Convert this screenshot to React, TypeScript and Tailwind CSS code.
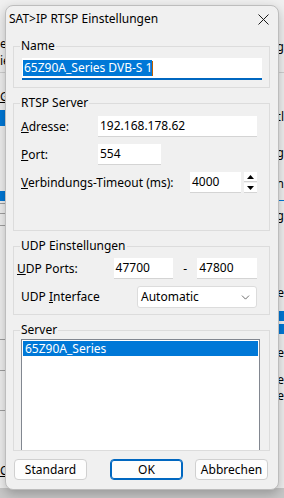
import { ChevronDown } from "lucide-react";

const font = { fontFamily: '"Noto Sans", "Liberation Sans", sans-serif' };

const TextBox = ({ value, className }: { value: string; className: string }) => (
  <div
    className={`h-[21px] bg-white border-b border-[#d4d4d4] flex items-center pl-[2px] text-[12px] text-black ${className}`}
  >
    {value}
  </div>
);

const Group = ({
  label,
  className,
  children,
}: {
  label: string;
  className: string;
  children?: React.ReactNode;
}) => (
  <div className={`relative border border-[#dcdcdc] ${className}`}>
    <span className="absolute -top-[9px] left-[6px] bg-[#f0f0f0] px-[1px] leading-[16px] text-[12px] text-black">
      {label}
    </span>
    {children}
  </div>
);

const Btn = ({ label, primary }: { label: string; primary?: boolean }) => (
  <button
    className={`w-[73px] h-[21px] rounded-[4px] bg-[#fdfdfd] text-[12px] text-black flex items-center justify-center ${
      primary ? "border border-[#0067c0] shadow-[inset_0_0_0_1px_#0067c0]" : "border border-[#d0d0d0]"
    }`}
  >
    {label}
  </button>
);

export default function App() {
  return (
    <div
      className="relative w-[284px] h-[498px] overflow-hidden bg-[#f0f0f0] text-black"
      style={font}
    >
      {/* background window bits */}
      <div className="absolute left-0 top-[37px] text-[12px] leading-[14px]">er</div>
      <div className="absolute left-0 top-[54px] text-[12px] leading-[14px]">ie</div>
      <div className="absolute left-0 right-0 top-[72px] h-px bg-[#d0d0d0]" />
      <div className="absolute left-0 top-[88px] text-[12px] underline">G</div>
      <div className="absolute left-0 top-[110px] w-[6px] h-[16px] bg-[#0078d7]" />
      <div className="absolute left-0 top-[191px] w-[6px] h-[10px] bg-[#0078d7]" />
      <div className="absolute left-0 top-[203px] w-[6px] h-px bg-[#a0a0a0]" />
      <div className="absolute left-0 top-[213px] w-[6px] h-px bg-[#a0a0a0]" />
      <div className="absolute left-0 top-[225px] w-[6px] h-px bg-[#a0a0a0]" />
      <div className="absolute left-0 top-[339px] w-[6px] h-px bg-[#a0a0a0]" />
      <div className="absolute left-0 top-[370px] w-[6px] h-px bg-[#a0a0a0]" />
      <div className="absolute left-0 top-[410px] w-[6px] h-px bg-[#a0a0a0]" />
      <div className="absolute right-0 top-[38px] text-[12px]">lg</div>
      <div className="absolute right-0 top-[108px] text-[12px]">tl</div>
      <div className="absolute right-0 top-[144px] text-[12px]">g</div>
      <div className="absolute right-0 top-[175px] text-[12px]">n</div>
      <div className="absolute right-0 top-[200px] w-[6px] h-px bg-[#0078d7]" />
      <div className="absolute right-0 top-[207px] text-[12px] underline">g</div>
      <div className="absolute right-0 top-[284px] text-[12px]">e</div>
      <div className="absolute right-0 top-[311px] w-[6px] h-[10px] bg-[#0078d7]" />
      <div className="absolute right-0 top-[324px] w-[6px] h-[10px] bg-[#0078d7]" />
      <div className="absolute right-0 top-[346px] text-[12px] leading-[14px]">e</div>
      <div className="absolute right-0 top-[373px] text-[12px] leading-[14px]">e</div>
      <div className="absolute right-0 top-[389px] text-[12px] leading-[14px]">e</div>
      <div className="absolute left-0 right-0 bottom-0 h-[10px] bg-[#c8c8c8]" />
      <div className="absolute left-0 top-[462px] text-[12px] underline">Co</div>

      {/* dialog */}
      <div className="absolute left-[5px] top-[5px] w-[274px] h-[485px] rounded-[8px] bg-[#f0f0f0] border border-[#bdbdbd] shadow-[0_4px_12px_rgba(0,0,0,0.25)] flex flex-col">
        <div className="h-[25px] flex items-center justify-between pl-[3px] pr-[9px] text-[12px]">
          <span className="mt-[1px]">SAT&gt;IP RTSP Einstellungen</span>
          <svg width="11" height="11" viewBox="0 0 11 11" className="mt-[1px]">
            <path d="M0.5 0.5 L10.5 10.5 M10.5 0.5 L0.5 10.5" stroke="#1a1a1a" strokeWidth="1" />
          </svg>
        </div>

        <div className="flex flex-col pl-[7px] pr-[8px]">
          <Group label="Name" className="mt-[15px] h-[42px] pt-[11px] pl-[8px] pr-[7px]">
            <div className="h-[22px] bg-white border-b-2 border-[#0067c0] flex items-center pl-[1px] text-[12px]">
              <span className="bg-[#0078d7] text-white leading-[16px] pl-[1px]">
                65Z90A_Series DVB-S 1
              </span>
              <span className="w-px h-[15px] bg-[#c06000]" />
            </div>
          </Group>

          <Group label="RTSP Server" className="mt-[15px] h-[128px] pt-[12px] pr-[12px] text-[12px]">
            <div className="flex items-center">
              <span className="w-[84px] pl-[7px]">
                <u>A</u>dresse:
              </span>
              <TextBox value="192.168.178.62" className="flex-1" />
            </div>
            <div className="flex items-center mt-[7px]">
              <span className="w-[84px] pl-[7px]">
                <u>P</u>ort:
              </span>
              <TextBox value="554" className="w-[63px]" />
            </div>
            <div className="flex items-center mt-[7px]">
              <span className="w-[176px] pl-[7px]">
                <u>V</u>erbindungs-Timeout (ms):
              </span>
              <TextBox value="4000" className="w-[51px]" />
              <div className="ml-[3px] w-[13px] h-[21px] flex flex-col gap-px">
                <div className="flex-1 bg-white border-b border-[#d4d4d4] flex items-center justify-center">
                  <svg width="7" height="4" viewBox="0 0 7 4">
                    <path d="M3.5 0 L7 4 L0 4 Z" fill="#000" />
                  </svg>
                </div>
                <div className="flex-1 bg-white border-b border-[#d4d4d4] flex items-center justify-center">
                  <svg width="7" height="4" viewBox="0 0 7 4">
                    <path d="M0 0 L7 0 L3.5 4 Z" fill="#000" />
                  </svg>
                </div>
              </div>
            </div>
          </Group>

          <Group label="UDP Einstellungen" className="mt-[15px] h-[69px] pt-[11px] pr-[12px] text-[12px]">
            <div className="flex items-center">
              <span className="w-[100px] pl-[3px]">
                <u>U</u>DP Ports:
              </span>
              <TextBox value="47700" className="w-[60px]" />
              <span className="w-[24px] text-center">-</span>
              <TextBox value="47800" className="w-[60px]" />
            </div>
            <div className="flex items-center mt-[7px]">
              <span className="w-[123px] pl-[7px]">
                UDP <u>I</u>nterface
              </span>
              <div className="flex-1 h-[22px] bg-white border border-[#dcdcdc] rounded-[3px] flex items-center justify-between pl-[3px] pr-[4px]">
                <span>Automatic</span>
                <ChevronDown size={13} strokeWidth={1.3} color="#333" />
              </div>
            </div>
          </Group>

          <Group label="Server" className="mt-[15px] h-[121px] pt-[8px] pl-[7px] pr-[9px] text-[12px]">
            <div className="h-[111px] bg-white border border-b-0 border-[#828790] p-[1px]">
              <div className="h-[15px] bg-[#0078d7] text-white flex items-center pl-[2px]">
                65Z90A_Series
              </div>
            </div>
          </Group>

          <div className="flex items-center mt-[8px] pl-[1px]">
            <Btn label="Standard" />
            <div className="ml-[23px]">
              <Btn label="OK" primary />
            </div>
            <div className="ml-[12px]">
              <Btn label="Abbrechen" />
            </div>
          </div>
        </div>
      </div>
    </div>
  );
}
